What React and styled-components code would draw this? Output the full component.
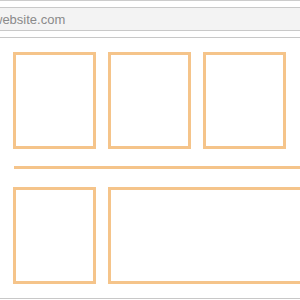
import React from 'react';
import styled, { createGlobalStyle } from 'styled-components';

const GlobalStyle = createGlobalStyle`
  html, body {
    margin: 0;
    padding: 0;
    background: #ffffff;
    overflow: hidden;
  }
  body {
    font-family: "Liberation Sans", Arial, sans-serif;
  }
`;

const Page = styled.div`
  width: 300px;
  height: 300px;
  overflow: hidden;
`;

const BrowserWindow = styled.div`
  width: 380px;
  margin-left: -30px;
  border-top: 1px solid #cccccc;
  border-bottom: 1px solid #c8c8c8;
`;

const Toolbar = styled.div`
  padding: 6px;
  border-bottom: 1px solid #c8c8c8;
`;

const AddressBar = styled.div`
  height: 22px;
  display: flex;
  align-items: center;
  padding-left: 16px;
  background: #f3f3f3;
  border: 1px solid #c9c9c9;
  font-size: 13px;
  color: #8a8a8a;
`;

const Content = styled.div`
  padding: 14px 0 14px 43px;
  display: flex;
  flex-direction: column;
`;

const Row = styled.div`
  display: grid;
  grid-template-columns: ${props => props.cols};
  column-gap: 12px;
  height: 97px;
`;

const Block = styled.div`
  border: 3px solid #f5c48a;
  box-sizing: border-box;
`;

const Divider = styled.div`
  height: 3px;
  background: #f5c48a;
  margin: 17px 0 18px 1px;
`;

export default function App() {
  return (
    <Page>
      <GlobalStyle />
      <BrowserWindow>
        <Toolbar>
          <AddressBar>website.com</AddressBar>
        </Toolbar>
        <Content>
          <Row cols="83px 83px 83px">
            <Block />
            <Block />
            <Block />
          </Row>
          <Divider />
          <Row cols="83px 1fr">
            <Block />
            <Block />
          </Row>
        </Content>
      </BrowserWindow>
    </Page>
  );
}
